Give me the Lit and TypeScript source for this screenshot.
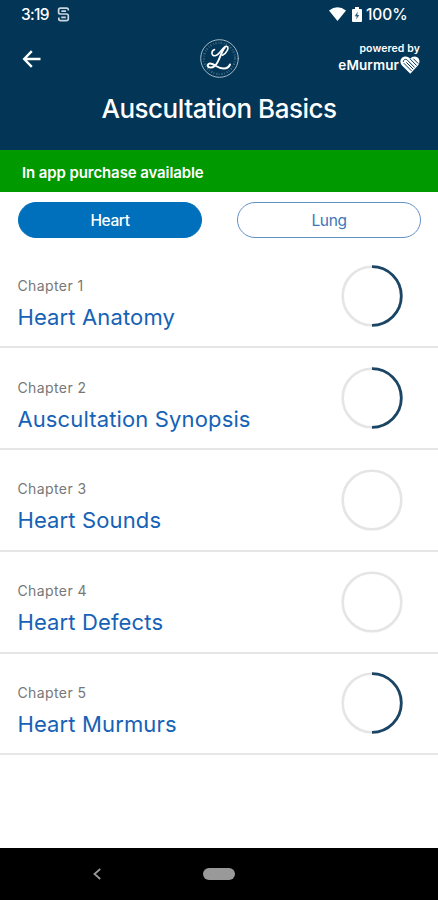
import { LitElement, html, svg, css } from "lit";
import { customElement, property } from "lit/decorators.js";

interface Chapter {
  title: string;
  progress: number;
}

const CHAPTERS: Chapter[] = [
  { title: "Heart Anatomy", progress: 0.5 },
  { title: "Auscultation Synopsis", progress: 0.5 },
  { title: "Heart Sounds", progress: 0 },
  { title: "Heart Defects", progress: 0 },
  { title: "Heart Murmurs", progress: 0.5 },
];

@customElement("progress-ring")
export class ProgressRing extends LitElement {
  @property({ type: Number }) value = 0;

  static styles = css`
    :host { display: block; width: 62px; height: 62px; }
    svg { display: block; }
    .track { fill: none; stroke: #e5e5e5; stroke-width: 2.6; }
    .bar { fill: none; stroke: #1a4565; stroke-width: 2.8; }
  `;

  render() {
    return html`<svg width="62" height="62" viewBox="0 0 62 62">
      <circle class="track" cx="31" cy="31" r="29.3" />
      ${this.value > 0
        ? svg`<circle class="bar" cx="31" cy="31" r="29.3" pathLength="100"
            stroke-dasharray="${this.value * 100} 100" transform="rotate(-90 31 31)" />`
        : null}
    </svg>`;
  }
}

@customElement("chapter-row")
export class ChapterRow extends LitElement {
  @property({ type: Number }) number = 1;
  @property() heading = "";
  @property({ type: Number }) progress = 0;

  static styles = css`
    :host {
      display: flex;
      align-items: center;
      justify-content: space-between;
      box-sizing: border-box;
      height: 101.8px;
      padding: 0 35px 0 17.4px;
      border-bottom: 2px solid #e6e6e6;
    }
    .text { display: flex; flex-direction: column; padding-top: 15px; }
    .label { font-size: 14px; line-height: 20px; letter-spacing: 0.42px; color: #777; }
    .title { margin-top: 6px; font-size: 22px; line-height: 30px; letter-spacing: 0.14px; color: #1562b6; white-space: nowrap; }
  `;

  render() {
    return html`
      <div class="text">
        <span class="label">Chapter ${this.number}</span>
        <span class="title">${this.heading}</span>
      </div>
      <progress-ring .value=${this.progress}></progress-ring>
    `;
  }
}

@customElement("app-root")
export class AppRoot extends LitElement {
  static styles = css`
    :host {
      display: flex;
      flex-direction: column;
      width: 438px;
      height: 900px;
      overflow: hidden;
      background: #fff;
      font-family: Inter, "Liberation Sans", sans-serif;
    }
    svg { display: block; flex: none; }
    header { height: 150px; background: #023556; color: #fff; flex: none; }
    .status { display: flex; align-items: center; height: 28px; padding: 0 31px 0 21px; font-size: 15.5px; font-weight: 500; }
    .time { letter-spacing: -0.7px; width: 28px; white-space: nowrap; }
    .notice { margin-left: 8px; }
    .wifi { margin-left: auto; }
    .battery { margin: 0 4px 0 6px; }
    .percent { width: 41px; white-space: nowrap; letter-spacing: -0.1px; }
    .bar { display: grid; grid-template-columns: 1fr 40px 1fr; align-items: center; height: 61px; padding: 0 19px 0 21px; }
    .brand { justify-self: end; text-align: right; margin-right: -1px; }
    .powered { font-size: 10.5px; line-height: 13px; font-weight: 600; letter-spacing: 0.1px; }
    .name { display: flex; align-items: center; justify-content: flex-end; gap: 1px; font-size: 13.5px; line-height: 20px; font-weight: 600; letter-spacing: 0.1px; }
    h1 { margin: 2px 0 0; text-align: center; font-size: 26px; line-height: 36px; font-weight: 500; letter-spacing: -0.5px; }
    .promo { display: flex; align-items: center; flex: none; box-sizing: border-box; height: 42px; padding: 3px 22px 0; background: #090; color: #fff; font-size: 15px; font-weight: 600; letter-spacing: -0.1px; }
    .tabs { display: flex; justify-content: space-between; flex: none; padding: 10px 17px 0 18px; box-sizing: border-box; height: 54.4px; }
    .tab { box-sizing: border-box; width: 184px; height: 36px; border: 1.3px solid #6291c8; border-radius: 18px; background: #fff; color: #3c76b9; font: 400 15.5px/33px Inter, sans-serif; letter-spacing: -0.4px; padding: 0; text-align: center; }
    .tab.active { background: #0070bd; border-color: #0070bd; color: #fff; font-weight: 500; }
    main { flex: 1; display: flex; flex-direction: column; }
    .nav { display: flex; align-items: center; flex: none; height: 52px; background: #000; }
    .back { margin-left: 92px; }
    .home { margin-left: 101px; width: 32px; height: 12px; border-radius: 6px; background: #999; }
  `;

  render() {
    return html`
      <header>
        <div class="status">
          <span class="time">3:19</span>
          <svg class="notice" width="13" height="15" viewBox="0 0 13 15" fill="none" stroke="#c9d6e0" stroke-width="1.7">
            <path d="M11.3 3.6V2.6Q11.3 1.2 9.8 1.2H3.4Q1.6 1.2 1.6 3V5.2Q1.6 7 3.4 7H9.5Q11.3 7 11.3 8.8V11.8Q11.3 13.7 9.3 13.7H3.6Q1.8 13.7 1.8 11.8V10.4M4.4 4.1H9M4.2 10.3H8.8" />
          </svg>
          <svg class="wifi" width="17" height="14" viewBox="0 0 17 14"><path d="M0 3.6Q8.5-3 17 3.6L8.5 14Z" fill="#fff" /></svg>
          <svg class="battery" width="10" height="15" viewBox="0 0 10 15">
            <path d="M3 0h4v2h2q1 0 1 1v11q0 1-1 1H1q-1 0-1-1V3q0-1 1-1h2z" fill="#fff" />
            <path d="M5.8 4.5 2.7 9.2h2L4.2 12.6 7.3 7.9h-2z" fill="#315b75" />
          </svg>
          <span class="percent">100%</span>
        </div>
        <div class="bar">
          <svg width="20" height="20" viewBox="0 0 20 20" fill="none" stroke="#fff" stroke-width="2.4">
            <path d="M19.5 10H3.5M10.8 2.2 3.2 10l7.6 7.8" />
          </svg>
          <svg width="40" height="40" viewBox="0 0 40 40" fill="none" stroke-linecap="round">
            <circle cx="19.5" cy="19.5" r="18.8" stroke="#a7bac8" stroke-width="1" />
            <circle cx="19.5" cy="19.5" r="15.6" stroke="#819cae" stroke-width="2.2" stroke-linecap="butt" stroke-dasharray="1.1 2.1 .7 1.4" opacity=".55" />
            <path d="M14.5 10.5C11 12 11 17 15 16.8 20.5 16 22 7.2 26.5 7.2 30 8.2 26.5 14.5 22.5 16.2" stroke="#fff" stroke-width="1.6" />
            <path d="M24.8 8.5C20.5 13 19.5 23.5 14.5 27.2 11 29.6 7.2 28.4 7.8 26 9 23.3 13 25 16 27 20.5 29.8 27.5 31.5 30 25.5" stroke="#fff" stroke-width="2" />
          </svg>
          <div class="brand">
            <div class="powered">powered by</div>
            <div class="name">
              <span>eMurmur</span>
              <svg width="20" height="18" viewBox="0 0 20 18">
                <path d="M10.3 17.8 1.7 9.2C-1.4 5 1.4.5 5.5.5 7.8.5 9.2 1.5 10.2 2.8 11.4 1.2 13 .5 14.8.5 19 .7 21 5.5 18.2 9.2Z" fill="#fff" />
                <path d="M10.2 3 16.7 9.6M13.3 2.6 18.3 7.6M3.4 5.8C3.3 3.4 5.8 2.6 7.5 4.3L14.7 11.5M3.8 7.2 11.8 15.2M6.3 6.3 13.2 13.2" fill="none" stroke="#023556" stroke-width="1" />
              </svg>
            </div>
          </div>
        </div>
        <h1>Auscultation Basics</h1>
      </header>
      <div class="promo">In app purchase available</div>
      <div class="tabs">
        <button class="tab active">Heart</button>
        <button class="tab">Lung</button>
      </div>
      <main>
        ${CHAPTERS.map(
          (c, i) => html`<chapter-row .number=${i + 1} .heading=${c.title} .progress=${c.progress}></chapter-row>`
        )}
      </main>
      <div class="nav">
        <svg class="back" width="10" height="12" viewBox="0 0 10 12" fill="none" stroke="#999" stroke-width="1.8"><path d="M8.2 1 2.5 6l5.7 5" /></svg>
        <div class="home"></div>
      </div>
    `;
  }
}
